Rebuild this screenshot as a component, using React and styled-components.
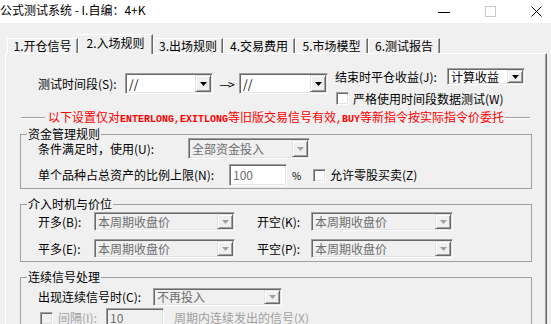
import React from 'react';
import styled, { createGlobalStyle } from 'styled-components';

const GlobalStyle = createGlobalStyle`
  html, body {
    margin: 0;
    padding: 0;
    background: #f0f0f0;
    overflow: hidden;
  }
  body {
    font-family: "SimSun", "Noto Sans CJK SC", sans-serif;
    font-size: 12px;
    color: #000;
  }
`;

const Window = styled.div`
  width: 551px;
  height: 324px;
  overflow: hidden;
  background: #f0f0f0;
  display: flex;
  flex-direction: column;
`;

const TitleBar = styled.div`
  flex: none;
  height: 23px;
  background: #fff;
  display: flex;
  align-items: center;
`;

const Title = styled.div`
  flex: 1;
  font-family: "Microsoft YaHei", "Noto Sans CJK SC", sans-serif;
  font-size: 12px;
  line-height: 20px;
  padding-bottom: 3px;
  white-space: nowrap;
`;

const Controls = styled.div`
  display: flex;
  height: 23px;
  margin-right: -8px;
`;

const ControlButton = styled.div`
  width: 46px;
  display: flex;
  align-items: center;
  justify-content: center;
`;

const Body = styled.div`
  flex: 1;
  min-height: 0;
  display: flex;
  flex-direction: column;
  padding: 0 4px 0 5px;
`;

const TabRow = styled.div`
  flex: none;
  height: 19px;
  margin-top: 11px;
  padding-left: 2px;
  display: flex;
  align-items: flex-end;
  position: relative;
  z-index: 1;
`;

const Tab = styled.div`
  box-sizing: border-box;
  width: ${p => p.$w}px;
  height: ${p => (p.$active ? 20 : 15)}px;
  margin-bottom: ${p => (p.$active ? -1 : 0)}px;
  padding-bottom: ${p => (p.$active ? 3 : 0)}px;
  background: #f0f0f0;
  border-top: 1px solid #fff;
  border-left: 1px solid #fff;
  border-right: 1px solid #696969;
  box-shadow: inset -1px 0 0 #a0a0a0;
  display: flex;
  align-items: center;
  justify-content: center;
  white-space: nowrap;
  line-height: 12px;
`;

const Panel = styled.div`
  flex: 1;
  display: flex;
  flex-direction: column;
  border-top: 1px solid #fff;
  border-left: 1px solid #fff;
  border-right: 1px solid #696969;
  box-shadow: inset -1px 0 0 #a0a0a0;
`;

const Top = styled.div`
  display: flex;
  align-items: flex-start;
  margin-top: 14px;
  padding-left: 32px;
`;

const TimeRange = styled.div`
  display: flex;
  align-items: center;
  height: 21px;
  margin-top: 5px;
`;

const EndColumn = styled.div`
  display: flex;
  flex-direction: column;
  margin-left: 7px;
`;

const Row = styled.div`
  display: flex;
  align-items: center;
  height: ${p => p.$h}px;
  margin-top: ${p => p.$mt || 0}px;
  padding-left: ${p => p.$pl || 0}px;
`;

const Label = styled.span`
  flex: none;
  width: ${p => p.$w}px;
  margin-left: ${p => p.$ml || 0}px;
  color: ${p => (p.$disabled ? '#a0a0a0' : '#000')};
  line-height: 14px;
  white-space: nowrap;
`;

const ArrowText = styled.span`
  width: 26px;
  text-align: center;
  letter-spacing: -2px;
`;

const Combo = styled.div`
  box-sizing: border-box;
  flex: none;
  width: ${p => p.$w}px;
  height: ${p => p.$h}px;
  padding: 1px;
  display: flex;
  background: ${p => (p.$disabled ? '#f0f0f0' : '#fff')};
  border: 1px solid;
  border-color: #a0a0a0 #fff #fff #a0a0a0;
  box-shadow: inset 1px 1px 0 #696969, inset -1px -1px 0 #e3e3e3;
`;

const ComboText = styled.div`
  flex: 1;
  display: flex;
  align-items: center;
  padding-left: 2px;
  line-height: 12px;
  white-space: nowrap;
  color: ${p => (p.$disabled ? '#6d6d6d' : '#000')};
`;

const DropButton = styled.div`
  box-sizing: border-box;
  width: 16px;
  flex: none;
  display: flex;
  align-items: center;
  justify-content: center;
  background: #f0f0f0;
  border: 1px solid;
  border-color: #e3e3e3 #696969 #696969 #e3e3e3;
  box-shadow: inset 1px 1px 0 #fff, inset -1px -1px 0 #a0a0a0;
`;

const CheckBox = styled.span`
  box-sizing: border-box;
  flex: none;
  width: 13px;
  height: 13px;
  margin-left: ${p => p.$ml || 0}px;
  margin-right: 4px;
  background: ${p => (p.$disabled ? '#f0f0f0' : '#fff')};
  border: 1px solid;
  border-color: #a0a0a0 #fff #fff #a0a0a0;
  box-shadow: inset 1px 1px 0 #696969, inset -1px -1px 0 #e3e3e3;
`;

const Notice = styled.div`
  display: flex;
  align-items: center;
  height: 14px;
  margin-top: 6px;
  padding-left: 15px;
`;

const EtchLine = styled.span`
  box-sizing: border-box;
  flex: none;
  width: ${p => p.$w}px;
  height: 2px;
  margin: ${p => p.$m};
  border-top: 1px solid #a0a0a0;
  border-bottom: 1px solid #fff;
`;

const NoticeText = styled.span`
  color: #ff0000;
  white-space: nowrap;
  font-size: 12px;
  line-height: 14px;
`;

const Latin = styled.span`
  font-family: "Liberation Mono", monospace;
  font-size: 10px;
  font-weight: bold;
`;

const Group = styled.fieldset`
  box-sizing: border-box;
  width: 512px;
  min-width: 0;
  margin: ${p => p.$mt}px 0 0 14px;
  padding: 0 0 ${p => p.$pb}px 0;
  border: 1px solid #a0a0a0;
  display: flex;
  flex-direction: column;
`;

const Legend = styled.legend`
  margin-left: 6px;
  padding: 0 1px;
  line-height: 12px;
  background: #f0f0f0;
`;

const Percent = styled.span`
  margin: 0 0 0 5px;
  width: 21px;
  font-size: 10px;
`;

const Arrow = ({ color }) => (
  <svg width="7" height="4" viewBox="0 0 7 4">
    <path d="M0 0h7L3.5 4z" fill={color} />
  </svg>
);

const Select = ({ w, h, text, disabled }) => (
  <Combo $w={w} $h={h} $disabled={disabled}>
    <ComboText $disabled={disabled}>{text}</ComboText>
    <DropButton>
      <Arrow color={disabled ? '#a0a0a0' : '#000'} />
    </DropButton>
  </Combo>
);

const Input = ({ w, h, text, disabled }) => (
  <Combo $w={w} $h={h} $disabled={disabled}>
    <ComboText $disabled>{text}</ComboText>
  </Combo>
);

const tabs = [
  { t: '1.开仓信号', w: 71 },
  { t: '2.入场规则', w: 75, active: true },
  { t: '3.出场规则', w: 70 },
  { t: '4.交易费用', w: 72 },
  { t: '5.市场模型', w: 73 },
  { t: '6.测试报告', w: 72 },
];

export default function App() {
  return (
    <Window>
      <GlobalStyle />
      <TitleBar>
        <Title>公式测试系统 - I.自编：4+K</Title>
        <Controls>
          <ControlButton>
            <svg width="12" height="10" viewBox="0 0 12 10">
              <path d="M0 5.5h12" stroke="#000" strokeWidth="1" />
            </svg>
          </ControlButton>
          <ControlButton>
            <svg width="11" height="11" viewBox="0 0 11 11">
              <rect x="0.5" y="0.5" width="10" height="10" fill="none" stroke="#c8c8c8" />
            </svg>
          </ControlButton>
          <ControlButton>
            <svg width="11" height="11" viewBox="0 0 11 11">
              <path d="M0.5 0.5l10 10M10.5 0.5l-10 10" stroke="#000" strokeWidth="1" />
            </svg>
          </ControlButton>
        </Controls>
      </TitleBar>
      <Body>
        <TabRow>
          {tabs.map(tab => (
            <Tab key={tab.t} $w={tab.w} $active={tab.active}>
              {tab.t}
            </Tab>
          ))}
        </TabRow>
        <Panel>
          <Top>
            <TimeRange>
              <Label $w={87}>测试时间段(S):</Label>
              <Select w={88} h={21} text="//" />
              <ArrowText>—&gt;</ArrowText>
              <Select w={89} h={21} text="//" />
            </TimeRange>
            <EndColumn>
              <Row $h={17}>
                <Label $w={112}>结束时平仓收益(J):</Label>
                <Select w={78} h={17} text="计算收益" />
              </Row>
              <Row $h={13} $mt={7}>
                <CheckBox $ml={1} />
                <Label>严格使用时间段数据测试(W)</Label>
              </Row>
            </EndColumn>
          </Top>

          <Notice>
            <EtchLine $w={24} $m="0 3px 0 0" />
            <NoticeText>
              以下设置仅对<Latin>ENTERLONG,EXITLONG</Latin>等旧版交易信号有效<Latin>,BUY</Latin>等新指令按实际指令价委托
            </NoticeText>
            <EtchLine $w={25} $m="0 0 0 1px" />
          </Notice>

          <Group $mt={3} $pb={2}>
            <Legend>资金管理规则</Legend>
            <Row $h={21} $mt={-2} $pl={17}>
              <Label $w={150}>条件满足时，使用(U):</Label>
              <Select w={122} h={21} text="全部资金投入" disabled />
            </Row>
            <Row $h={22} $mt={5} $pl={17}>
              <Label $w={191}>单个品种占总资产的比例上限(N):</Label>
              <Input w={58} h={22} text="100" />
              <Percent>%</Percent>
              <CheckBox />
              <Label>允许零股买卖(Z)</Label>
            </Row>
          </Group>

          <Group $mt={9} $pb={3}>
            <Legend>介入时机与价位</Legend>
            <Row $h={19} $mt={2} $pl={17}>
              <Label $w={56}>开多(B):</Label>
              <Select w={141} h={19} text="本周期收盘价" disabled />
              <Label $w={54} $ml={22}>开空(K):</Label>
              <Select w={142} h={19} text="本周期收盘价" disabled />
            </Row>
            <Row $h={19} $mt={8} $pl={17}>
              <Label $w={56}>平多(E):</Label>
              <Select w={141} h={19} text="本周期收盘价" disabled />
              <Label $w={54} $ml={22}>平空(P):</Label>
              <Select w={142} h={19} text="本周期收盘价" disabled />
            </Row>
          </Group>

          <Group $mt={9} $pb={4}>
            <Legend>连续信号处理</Legend>
            <Row $h={18} $mt={5} $pl={17}>
              <Label $w={115}>出现连续信号时(C):</Label>
              <Select w={129} h={18} text="不再投入" disabled />
            </Row>
            <Row $h={20} $mt={2} $pl={17}>
              <CheckBox $ml={2} $disabled />
              <Label $w={48} $ml={1} $disabled>间隔(I):</Label>
              <Input w={58} h={20} text="10" disabled />
              <Label $ml={10} $disabled>周期内连续发出的信号(X)</Label>
            </Row>
          </Group>
        </Panel>
      </Body>
    </Window>
  );
}
